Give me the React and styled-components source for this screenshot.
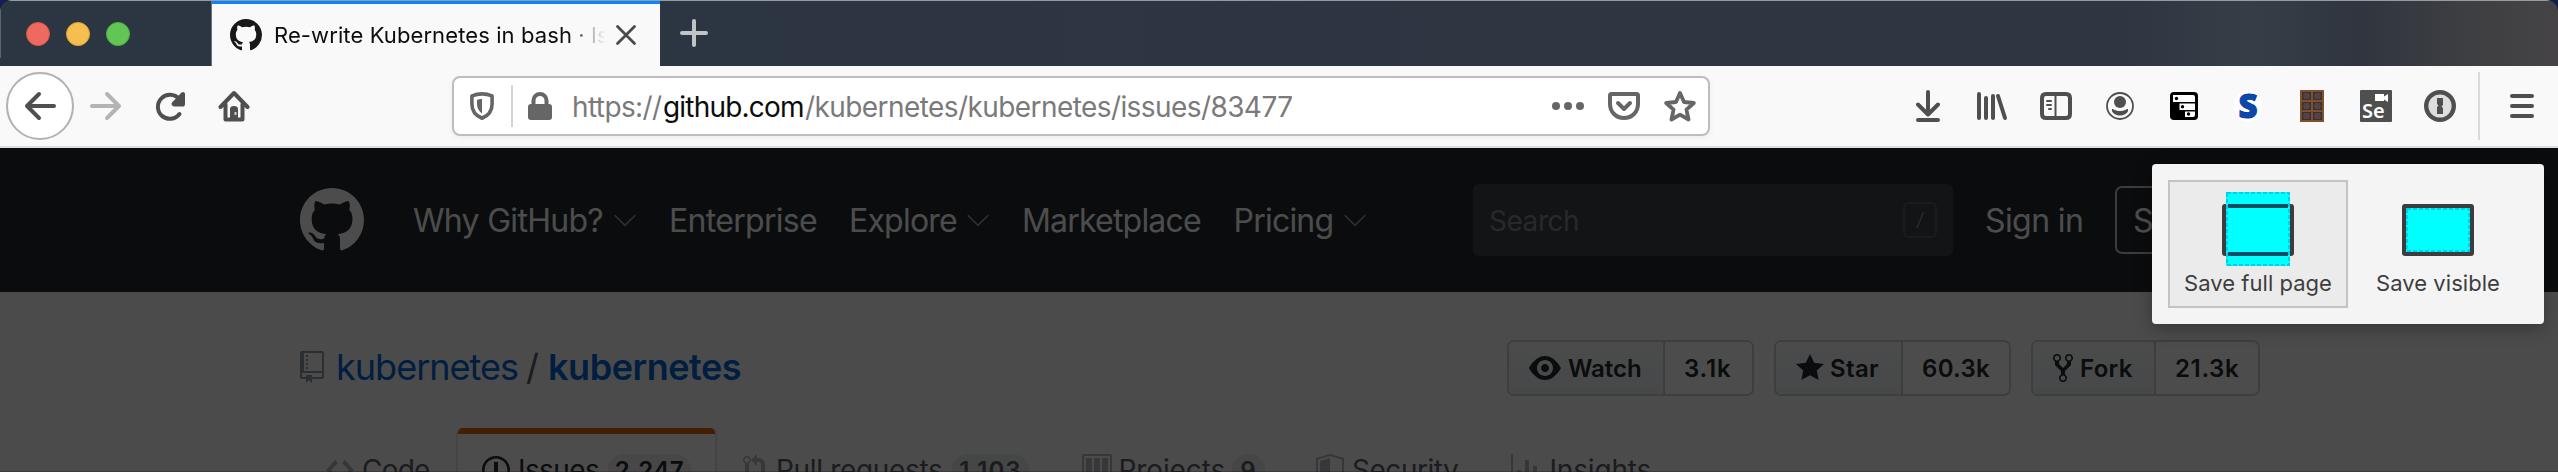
import React from 'react';
import styled, { createGlobalStyle } from 'styled-components';

const GlobalStyle = createGlobalStyle`
  * { box-sizing: border-box; }
  body { margin: 0; background: #14204a; overflow: hidden; }
`;

const Window = styled.div`
  position: relative;
  width: 2558px;
  height: 472px;
  display: flex;
  flex-direction: column;
  overflow: hidden;
  border-radius: 12px 12px 0 0;
  font-family: Inter, "Liberation Sans", sans-serif;
`;

const Label = styled.span`
  flex: none;
  display: block;
  width: ${(p) => (p.$w ? `${p.$w}px` : 'auto')};
  margin-left: ${(p) => p.$ml || 0}px;
  padding-top: ${(p) => p.$drop || 0}px;
  font-size: ${(p) => p.$size}px;
  font-weight: ${(p) => p.$weight || 400};
  letter-spacing: ${(p) => p.$track || 0}px;
  color: ${(p) => p.$color || 'inherit'};
  line-height: 1.25;
  white-space: pre;
`;

/* Browser chrome */

const TabStrip = styled.div`
  flex: none;
  height: 66px;
  display: flex;
  align-items: stretch;
  border-top: 1px solid #959ba2;
  background: linear-gradient(90deg, #2c3643 0, #2d3543 900px, #303641 1900px, #2f3541 2120px, #353e47 2250px, #30353f 2360px, #3e3f42 2470px, #454346 2558px);
`;

const TrafficLights = styled.div`
  width: 212px;
  padding: 8px 0 0 25px;
  display: flex;
  align-items: center;
  gap: 16px;
  height: 57px;
  border-left: 1px solid #5c646f;
`;

const Light = styled.i`
  width: 24px;
  height: 24px;
  border-radius: 50%;
  background: ${(p) => p.$color};
  border: 1px solid ${(p) => p.$edge};
`;

const BrowserTab = styled.div`
  width: 448px;
  display: flex;
  align-items: center;
  border-top: 3px solid #0a84ff;
  background: #f9f9f9;
  padding-left: 18px;
  box-shadow: -1px 0 0 #69717b;
  color: #0c0c0d;
`;

const TabTitle = styled.div`
  width: 333px;
  margin-left: 10px;
  overflow: hidden;
  mask-image: linear-gradient(90deg, #000 296px, rgba(0, 0, 0, 0.32) 318px, transparent 334px);
`;

const CloseIcon = styled.svg`
  margin-left: 9px;
`;

const PlusIcon = styled.svg`
  margin: 18px 0 0 20px;
`;

const Toolbar = styled.div`
  flex: none;
  height: 82px;
  display: flex;
  align-items: center;
  background: #f9f9fa;
  border-bottom: 2px solid #dedee0;
`;

const BackButton = styled.div`
  width: 68px;
  height: 68px;
  margin: 0 16px 0 6px;
  border: 2px solid #b1b1b3;
  border-radius: 50%;
  background: #fff;
  display: flex;
  align-items: center;
  justify-content: center;
`;

const Icon = styled.svg`
  flex: none;
  display: block;
  margin-left: ${(p) => p.$ml || 0}px;
`;

const UrlBar = styled.div`
  width: 1258px;
  height: 60px;
  margin-left: 202px;
  display: flex;
  align-items: center;
  background: #fff;
  border: 2px solid #bdbdbe;
  border-radius: 8px;
  box-shadow: 0 2px 6px rgba(0, 0, 0, 0.05);
  color: #7a7a7b;
`;

const UrlDivider = styled.div`
  width: 2px;
  height: 42px;
  margin-left: 17px;
  background: #d3d3d4;
`;

const Url = styled.div`
  display: flex;
  width: 960px;
  margin-left: 18px;
  padding-top: 2px;
`;

const Extensions = styled.div`
  display: flex;
  margin-left: 186px;
`;

const Cell = styled.div`
  width: 64px;
  height: 40px;
  display: flex;
  align-items: center;
  justify-content: center;
`;

const LetterBadge = styled.div`
  width: 28px;
  height: 32px;
  border-radius: 50%;
  background: #fff;
  color: #0b49ae;
  font: 800 33px/32px "Open Sans", sans-serif;
  text-align: center;
  -webkit-text-stroke: 1px #0b3f94;
`;

const SeleniumBadge = styled.div`
  width: 32px;
  height: 32px;
  border-radius: 1px;
  background: #4f4f4f;
  color: #fff;
  display: flex;
  flex-direction: column;
  align-items: flex-end;
  padding: 4px 4px 0 2px;
  font: 600 20px/20px "Noto Sans", sans-serif;
`;

const SeleniumText = styled.span`
  align-self: flex-start;
  line-height: 19px;
  margin-top: -1px;
`;

const MenuDivider = styled.div`
  width: 2px;
  height: 68px;
  margin: 0 26px 0 6px;
  background: #dadadb;
`;

/* Page */

const Page = styled.div`
  position: relative;
  flex: 1;
  background: #fafbfc;
  overflow: hidden;
`;

const Dim = styled.div`
  position: absolute;
  inset: 0;
  background: rgba(0, 0, 0, 0.7);
  border-bottom: 1px solid rgba(30, 24, 28, 0.3);
`;

const SiteHeader = styled.div`
  height: 144px;
  display: flex;
  align-items: center;
  padding-left: 300px;
  background: #24292e;
  color: #fff;
`;

const SiteNav = styled.div`
  display: flex;
  align-items: center;
  width: 1173px;
`;

const SearchBox = styled.div`
  flex: none;
  width: 480px;
  height: 72px;
  border-radius: 6px;
  background: rgba(255, 255, 255, 0.125);
  display: flex;
  align-items: center;
  justify-content: space-between;
  padding: 0 16px;
  color: #878b90;
`;

const SlashKey = styled.div`
  width: 34px;
  height: 36px;
  border: 2px solid #5b5f64;
  border-radius: 6px;
  display: flex;
  align-items: center;
  justify-content: center;
`;

const SignUp = styled.div`
  width: 134px;
  height: 68px;
  margin-left: 32px;
  border: 2px solid #c9cacc;
  border-radius: 7px;
  display: flex;
  align-items: center;
  padding-left: 16px;
`;

const RepoHead = styled.div`
  height: 136px;
  display: flex;
  align-items: center;
  padding: 14px 0 0 300px;
`;

const RepoTitle = styled.div`
  display: flex;
  align-items: center;
  width: 1207px;
  color: #0366d6;
`;

const SocialButtons = styled.div`
  display: flex;
  gap: 20px;
  padding-top: 2px;
`;

const Social = styled.div`
  display: flex;
  width: ${(p) => p.$w}px;
  height: 56px;
  border: 2px solid #cfd1d3;
  border-radius: 7px;
  background: #fff;
  color: #24292e;
  overflow: hidden;
`;

const SocialAction = styled.div`
  width: ${(p) => p.$w}px;
  display: flex;
  align-items: center;
  padding-left: 20px;
  border-right: 2px solid #cfd1d3;
  background: linear-gradient(#fafbfc, #eff3f6 90%);
`;

const SocialCount = styled.div`
  display: flex;
  align-items: center;
  padding-left: 19px;
`;

const RepoTabs = styled.div`
  display: flex;
  padding-left: 300px;
`;

const RepoTab = styled.div`
  width: ${(p) => p.$w}px;
  height: 84px;
  display: flex;
  align-items: center;
  padding-left: 26px;
  color: #586069;
`;

const ActiveRepoTab = styled(RepoTab)`
  border: solid #e1e4e8;
  border-width: 0 2px;
  border-radius: 6px 6px 0 0;
  padding-left: 24px;
  color: #24292e;
  background: linear-gradient(#e36209 6px, #fff 6px);
`;

const Counter = styled.div`
  width: ${(p) => p.$w}px;
  height: 32px;
  border-radius: 20px;
  background: rgba(27, 31, 35, 0.08);
  display: flex;
  align-items: center;
  justify-content: center;
`;

const Popup = styled.div`
  position: absolute;
  left: 2152px;
  top: 164px;
  width: 392px;
  height: 160px;
  border-radius: 4px;
  background: #f4f4f4;
  box-shadow: 0 4px 18px rgba(0, 0, 0, 0.3);
  display: flex;
  padding: 16px;
`;

const SaveOption = styled.div`
  width: 180px;
  height: 128px;
  display: flex;
  flex-direction: column;
  align-items: center;
  border: 2px solid ${(p) => (p.$active ? '#c3c3c4' : 'transparent')};
  background: ${(p) => (p.$active ? '#ebebeb' : 'transparent')};
  color: #3d3d3f;
  padding-top: 10px;
`;

const OptionText = styled(Label)`
  margin-top: 4px;
`;

const MARK = 'M8 0C3.58 0 0 3.58 0 8c0 3.54 2.29 6.53 5.47 7.59.4.07.55-.17.55-.38 0-.19-.01-.82-.01-1.49-2.01.37-2.53-.49-2.69-.94-.09-.23-.48-.94-.82-1.13-.28-.15-.68-.52-.01-.53.63-.01 1.08.58 1.23.82.72 1.21 1.87.87 2.33.66.07-.52.28-.87.51-1.07-1.78-.2-3.64-.89-3.64-3.95 0-.87.31-1.59.82-2.15-.08-.2-.36-1.02.08-2.12 0 0 .67-.21 2.2.82.64-.18 1.32-.27 2-.27.68 0 1.36.09 2 .27 1.53-1.04 2.2-.82 2.2-.82.44 1.1.16 1.92.08 2.12.51.56.82 1.27.82 2.15 0 3.07-1.87 3.75-3.65 3.95.29.25.54.73.54 1.48 0 1.07-.01 1.93-.01 2.2 0 .21.15.46.55.38A8.013 8.013 0 0 0 16 8c0-4.42-3.58-8-8-8z';
const OCT = {
  repo: [12, 'M4 9H3V8h1v1zm0-3H3v1h1V6zm0-2H3v1h1V4zm0-2H3v1h1V2zm8-1v12c0 .55-.45 1-1 1H6v2l-1.5-1.5L3 16v-2H1c-.55 0-1-.45-1-1V1c0-.55.45-1 1-1h10c.55 0 1 .45 1 1zm-1 10H1v2h2v-1h3v1h5v-2zm0-10H2v9h9V1z'],
  eye: [16, 'M8.06 2C3 2 0 8 0 8s3 6 8.06 6C13 14 16 8 16 8s-3-6-7.94-6zM8 12c-2.2 0-4-1.78-4-4 0-2.2 1.8-4 4-4 2.22 0 4 1.8 4 4 0 2.22-1.78 4-4 4zm2-4c0 1.11-.89 2-2 2-1.11 0-2-.89-2-2 0-1.11.89-2 2-2 1.11 0 2 .89 2 2z'],
  star: [14, 'M14 6l-4.9-.64L7 1 4.9 5.36 0 6l3.6 3.26L2.67 14 7 11.67 11.33 14l-.93-4.74L14 6z'],
  fork: [10, 'M8 1a1.993 1.993 0 0 0-1 3.72V6L5 8 3 6V4.72A1.993 1.993 0 0 0 2 1a1.993 1.993 0 0 0-1 3.72V6.5l3 3v1.78A1.993 1.993 0 0 0 5 15a1.993 1.993 0 0 0 1-3.72V9.5l3-3V4.72A1.993 1.993 0 0 0 8 1zM2 4.2C1.34 4.2.8 3.65.8 3c0-.65.55-1.2 1.2-1.2.65 0 1.2.55 1.2 1.2 0 .65-.55 1.2-1.2 1.2zm3 10c-.66 0-1.2-.55-1.2-1.2 0-.65.55-1.2 1.2-1.2.65 0 1.2.55 1.2 1.2 0 .65-.55 1.2-1.2 1.2zm3-10c-.66 0-1.2-.55-1.2-1.2 0-.65.55-1.2 1.2-1.2.65 0 1.2.55 1.2 1.2 0 .65-.55 1.2-1.2 1.2z'],
  code: [14, 'M9.5 3L8 4.5 11.5 8 8 11.5 9.5 13 14 8 9.5 3zm-5 0L0 8l4.5 5L6 11.5 2.5 8 6 4.5 4.5 3z'],
  issue: [14, 'M7 2.3c3.14 0 5.7 2.56 5.7 5.7s-2.56 5.7-5.7 5.7A5.71 5.71 0 0 1 1.3 8c0-3.14 2.56-5.7 5.7-5.7zM7 1C3.14 1 0 4.14 0 8s3.14 7 7 7 7-3.14 7-7-3.14-7-7-7zm1 3H6v5h2V4zm0 6H6v2h2v-2z'],
  pull: [12, 'M11 11.28V5c-.03-.78-.34-1.47-.94-2.06C9.46 2.35 8.78 2.03 8 2H7V0L4 3l3 3V4h1c.27.02.48.11.69.31.21.2.3.42.31.69v6.28A1.993 1.993 0 0 0 10 15a1.993 1.993 0 0 0 1-3.72zm-1 2.92c-.66 0-1.2-.55-1.2-1.2 0-.65.55-1.2 1.2-1.2.65 0 1.2.55 1.2 1.2 0 .65-.55 1.2-1.2 1.2zM4 3c0-1.11-.89-2-2-2a1.993 1.993 0 0 0-1 3.72v6.56A1.993 1.993 0 0 0 2 15a1.993 1.993 0 0 0 1-3.72V4.72c.59-.34 1-.98 1-1.72zm-.8 10c0 .66-.55 1.2-1.2 1.2-.65 0-1.2-.55-1.2-1.2 0-.65.55-1.2 1.2-1.2.65 0 1.2.55 1.2 1.2zM2 4.2C1.34 4.2.8 3.65.8 3c0-.65.55-1.2 1.2-1.2.65 0 1.2.55 1.2 1.2 0 .65-.55 1.2-1.2 1.2z'],
  project: [15, 'M10 12h3V2h-3v10zm-4-2h3V2H6v8zm-4 4h3V2H2v12zm-1 1h13V1H1v14zM14 0H1a1 1 0 0 0-1 1v14a1 1 0 0 0 1 1h13a1 1 0 0 0 1-1V1a1 1 0 0 0-1-1z'],
  shield: [14, 'M0 2l7-2 7 2v6.02C14 12.69 8.69 16 7 16c-1.69 0-7-3.31-7-7.98V2zm1 .75L7 1l6 1.75v5.268C13 12.104 8.449 15 7 15c-1.449 0-6-2.896-6-6.982V2.75zm1 .75L7 2v12c-1.207 0-5-2.482-5-5.985V3.5z'],
  graph: [16, 'M16 14v1H0V0h1v14h15zM5 13H3V8h2v5zm4 0H7V3h2v10zm4 0h-2V6h2v7z'],
};

function Oct({ name, color }) {
  const [w, d] = OCT[name];
  return (
    <Icon width={w * 2} height={32} viewBox={`0 0 ${w} 16`}>
      <path fill={color} fillRule="evenodd" d={d} />
    </Icon>
  );
}

function Line({ d, color = '#4f4f50', width = 4, ml, size = 32, children }) {
  return (
    <Icon $ml={ml} width={size} height={32} viewBox={`0 0 ${size} 32`} fill="none" stroke={color} strokeWidth={width} strokeLinecap="round" strokeLinejoin="round">
      <path d={d} />
      {children}
    </Icon>
  );
}

function Chevron({ ml }) {
  return (
    <Icon $ml={ml} width="22" height="14" viewBox="0 0 22 14" fill="none" stroke="#fff" strokeOpacity=".55" strokeWidth="1.6">
      <path d="M.8 2.2L11 12.4 21.2 2.2" />
    </Icon>
  );
}

const SOCIAL = [
  { icon: 'eye', text: 'Watch', count: '3.1k', w: 247, aw: 156, tw: -0.04, ct: 0.86, g: 7 },
  { icon: 'star', text: 'Star', count: '60.3k', w: 237, aw: 127, tw: 0.34, ct: 0.29, g: 6 },
  { icon: 'fork', text: 'Fork', count: '21.3k', w: 229, aw: 123, tw: 0.3, ct: 0.64, g: 7 },
];

export default function App() {
  return (
    <Window>
      <GlobalStyle />
      <TabStrip>
        <TrafficLights>
          <Light $color="#ee6a5f" $edge="#d8554b" />
          <Light $color="#f5be4f" $edge="#dba63a" />
          <Light $color="#62c654" $edge="#51ad43" />
        </TrafficLights>
        <BrowserTab>
          <Icon width="32" height="32" viewBox="0 0 16 16"><path fill="#191717" d={MARK} /></Icon>
          <TabTitle><Label $size={22} $ml={2} $drop={2} $track={0.1}>Re-write Kubernetes in bash · Is</Label></TabTitle>
          <CloseIcon width="24" height="24" viewBox="0 0 24 24" stroke="#4a4a4b" strokeWidth="2.8" strokeLinecap="round">
            <path d="M3.500 3.500l17 17M20.500 3.500l-17 17" />
          </CloseIcon>
        </BrowserTab>
        <PlusIcon width="28" height="28" viewBox="0 0 28 28" stroke="#c0c3c8" strokeWidth="4" strokeLinecap="round">
          <path d="M14 2v24M2 14h24" />
        </PlusIcon>
      </TabStrip>

      <Toolbar>
        <BackButton><Line d="M30 16H3M15 4L3 16l12 12" /></BackButton>
        <Line color="#b4b4b5" d="M2 16h27M17 4l12 12-12 12" />
        <Line ml={32} d="M25.5 24A12 12 0 1 1 25 9M29 4v10H19.500z"><path fill="#4f4f50" strokeWidth="2" d="M29.500 6v9.500H20z" /></Line>
        <Line ml={32} d="M2.500 17L16 3l13.500 14M7.500 14v15.500h17V14">
          <path fill="#4f4f50" stroke="none" d="M12 29V19q0-3 4-3t4 3v10z" />
          <path fill="#d0d0d0" stroke="none" d="M16.500 22h2v3h-2z" />
        </Line>
        <UrlBar>
          <Icon $ml={16} width="24" height="28" viewBox="0 0 24 28">
            <path fill="none" stroke="#666667" strokeWidth="3.600" strokeLinejoin="round" d="M12 1.900C8 1.900 4.500 2.900 1.900 3.900V12c0 7 4.500 12 10.100 14.200C17.600 24 22.100 19 22.100 12V3.900C19.500 2.900 16 1.900 12 1.900z" />
            <path fill="#666667" d="M12 7c-2 0-3.500.3-5 .9V12c0 4 2 7.500 5 9.500z" />
          </Icon>
          <UrlDivider />
          <Icon $ml={15} width="24" height="28" viewBox="0 0 24 28">
            <path fill="none" stroke="#666667" strokeWidth="4" d="M5.500 13V8.500a6.500 6.500 0 0 1 13 0V13" />
            <rect y="12" width="24" height="16" rx="3" fill="#666667" />
          </Icon>
          <Url>
            <Label $size={28} $ml={2} $w={91} $track={-0.6}>https://</Label>
            <Label $size={28} $w={142} $track={-0.8} $color="#0c0c0d">github.com</Label>
            <Label $size={28} $track={-0.58}>/kubernetes/kubernetes/issues/83477</Label>
          </Url>
          <Icon $ml={22} width="32" height="8" viewBox="0 0 32 8" fill="#666667">
            <circle cx="4" cy="4" r="4" /><circle cx="16" cy="4" r="4" /><circle cx="28" cy="4" r="4" />
          </Icon>
          <Line ml={24} color="#666667" d="M3.500 4h25q1.500 0 1.500 1.500V14C30 22 24 28 16 28S2 22 2 14V5.500Q2 4 3.500 4zM10 13l6 6 6-6" />
          <Line ml={24} color="#666667" width={3.8} d="M16 3l4 9 9.800 1-7.300 6.700L24.500 29.500 16 24.700 7.500 29.500l2-9.800L2.200 13 12 12z" />
        </UrlBar>
        <Extensions>
          <Cell><Line size={24} d="M12 2v22M2 14.500l10 10 10-10M2 30h20" /></Cell>
          <Cell><Line d="M3 4v24M10 8v20M17 6v22M22 6l7 22" width={4} /></Cell>
          <Cell><Line d="M6 4h20q4 0 4 4v16q0 4-4 4H6q-4 0-4-4V8q0-4 4-4z"><path strokeWidth="2" strokeLinecap="butt" d="M15.500 4v24" /><path strokeWidth="2" d="M7 11h4M7 15h4M9 19h2" /></Line></Cell>
          <Cell>
            <Icon width="28" height="28" viewBox="0 0 28 28" fill="#4f4f50">
              <circle cx="14" cy="14" r="13" fill="none" stroke="#4f4f50" strokeWidth="1.800" />
              <circle cx="14" cy="10" r="6" />
              <path d="M6 17c2 0 3 2 8 2s6-2 8-2c1 4-4 6.500-8 6.500S5 21 6 17z" />
            </Icon>
          </Cell>
          <Cell>
            <Icon width="28" height="28" viewBox="0 0 28 28">
              <rect width="28" height="28" rx="4" fill="#000" />
              <path fill="#fff" d="M3 3h20q2 0 2 2v5H3zM9.500 11.500H25V18H9.500zM15 19.500h10V23q0 2-2 2h-8z" />
              <circle cx="6.500" cy="6.500" r="1.700" /><circle cx="12.500" cy="14.700" r="1.700" /><circle cx="18.500" cy="22" r="1.700" />
            </Icon>
          </Cell>
          <Cell><LetterBadge>S</LetterBadge></Cell>
          <Cell>
            <Icon width="24" height="32" viewBox="0 0 24 32">
              <rect width="24" height="32" fill="#7b5130" />
              <path fill="#3e302b" d="M2 2h9v8H2zM13 2h9v8h-9zM2 12h9v8H2zM13 12h9v8h-9zM2 22h9v8H2zM13 22h9v8h-9z" />
              <path fill="#534349" d="M4 3h5l1 3-1 3H4L3 6zM15 3h5l1 3-1 3h-5l-1-3zM4 13h5l1 3-1 3H4l-1-3zM15 13h5l1 3-1 3h-5l-1-3zM4 23h5l1 3-1 3H4l-1-3zM15 23h5l1 3-1 3h-5l-1-3z" />
            </Icon>
          </Cell>
          <Cell>
            <SeleniumBadge>
              <Icon width="13" height="8" viewBox="0 0 13 8" fill="#fff"><path d="M0 0h9v2.500L13 0v8L9 5.500V7H0z" /></Icon>
              <SeleniumText>Se</SeleniumText>
            </SeleniumBadge>
          </Cell>
          <Cell>
            <Icon width="32" height="32" viewBox="0 0 32 32">
              <circle cx="16" cy="16" r="13.800" fill="#dedede" stroke="#4f4f50" strokeWidth="4.400" />
              <path fill="#4f4f50" d="M13 8h6v7l-1.500 1.500L19 18v6h-6v-7l1.500-1.500L13 14z" />
            </Icon>
          </Cell>
        </Extensions>
        <MenuDivider />
        <Line d="M6 6h20M6 16h20M6 26h20" />
      </Toolbar>

      <Page>
        <SiteHeader>
          <SiteNav>
            <Icon width="64" height="64" viewBox="0 0 16 16"><path fill="#fff" d={MARK} /></Icon>
            <Label $ml={49} $drop={2} $size={32} $w={190} $track={-0.7}>Why GitHub?</Label>
            <Chevron ml={11} />
            <Label $ml={33} $drop={2} $size={32} $w={149} $track={-0.7}>Enterprise</Label>
            <Label $ml={31} $drop={2} $size={32} $w={108} $track={-0.79}>Explore</Label>
            <Chevron ml={10} />
            <Label $ml={33} $drop={2} $size={32} $w={180} $track={-0.8}>Marketplace</Label>
            <Label $ml={31.5} $drop={2} $size={32} $w={100} $track={-0.78}>Pricing</Label>
            <Chevron ml={10.5} />
          </SiteNav>
          <SearchBox>
            <Label $size={28} $drop={2} $track={-0.47}>Search</Label>
            <SlashKey>
              <Icon width="10" height="20" viewBox="0 0 10 20" stroke="#878b90" strokeWidth="1.600"><path d="M8.500 2L2 18" /></Icon>
            </SlashKey>
          </SearchBox>
          <Label $ml={32} $drop={2} $size={32} $w={98} $track={-0.59}>Sign in</Label>
          <SignUp><Label $drop={2} $size={32} $track={-0.6}>Sign up</Label></SignUp>
        </SiteHeader>

        <RepoHead>
          <RepoTitle>
            <Oct name="repo" color="#959da5" />
            <Label $ml={12} $drop={1} $size={36} $w={190} $track={-0.98}>kubernetes</Label>
            <Label $drop={1} $size={36} $w={22} $color="#586069">/</Label>
            <Label $drop={1} $size={36} $weight={600} $track={-0.45}>kubernetes</Label>
          </RepoTitle>
          <SocialButtons>
            {SOCIAL.map((s) => (
              <Social key={s.text} $w={s.w}>
                <SocialAction $w={s.aw}>
                  <Oct name={s.icon} color="#24292e" />
                  <Label $ml={s.g} $drop={1} $size={24} $weight={600} $track={s.tw}>{s.text}</Label>
                </SocialAction>
                <SocialCount><Label $drop={1} $size={24} $weight={600} $track={s.ct}>{s.count}</Label></SocialCount>
              </Social>
            ))}
          </SocialButtons>
        </RepoHead>

        <RepoTabs>
          <RepoTab $w={156}>
            <Oct name="code" color="#b4b9be" />
            <Label $ml={8} $drop={1} $size={28} $track={-0.8}>Code</Label>
          </RepoTab>
          <ActiveRepoTab $w={261}>
            <Oct name="issue" color="#24292e" />
            <Label $ml={8} $drop={1} $size={28} $w={90} $track={-0.59}>Issues</Label>
            <Counter $w={83}><Label $drop={1} $size={24} $weight={600} $track={0.46}>2,247</Label></Counter>
          </ActiveRepoTab>
          <RepoTab $w={338.5}>
            <Oct name="pull" color="#b4b9be" />
            <Label $ml={9} $drop={1} $size={28} $w={176} $track={-0.33}>Pull requests</Label>
            <Counter $w={77}><Label $drop={1} $size={24} $weight={600} $track={1.09}>1,103</Label></Counter>
          </RepoTab>
          <RepoTab $w={234.5}>
            <Oct name="project" color="#b4b9be" />
            <Label $ml={7} $drop={1} $size={28} $w={113} $track={-0.11}>Projects</Label>
            <Counter $w={33}><Label $drop={1} $size={24} $weight={600}>9</Label></Counter>
          </RepoTab>
          <RepoTab $w={194.5}>
            <Oct name="shield" color="#b4b9be" />
            <Label $ml={8} $drop={1} $size={28} $track={-0.47}>Security</Label>
          </RepoTab>
          <RepoTab $w={200}>
            <Oct name="graph" color="#b4b9be" />
            <Label $ml={7} $drop={1} $size={28} $track={-0.18}>Insights</Label>
          </RepoTab>
        </RepoTabs>
        <Dim />
      </Page>

      <Popup>
        <SaveOption $active>
          <Icon width="72" height="74" viewBox="0 0 72 74">
            <rect x="2" y="14" width="68" height="48" rx="1" fill="none" stroke="#3d3d3f" strokeWidth="4" />
            <rect x="4" width="64" height="74" fill="#00ffff" />
            <path fill="#004e63" d="M6 12h60v4H6zM6 60h60v4H6z" />
            <rect x="5" y="1" width="62" height="72" fill="none" stroke="#00d0e6" strokeWidth="2" strokeDasharray="4 2" />
          </Icon>
          <OptionText $size={22} $track={0.03}>Save full page</OptionText>
        </SaveOption>
        <SaveOption>
          <Icon width="72" height="74" viewBox="0 0 72 74">
            <rect x="2" y="14" width="68" height="48" rx="1" fill="#00ffff" stroke="#3d3d3f" strokeWidth="4" />
            <rect x="5" y="17" width="62" height="42" fill="none" stroke="#00d0e6" strokeWidth="2" strokeDasharray="4 2" />
          </Icon>
          <OptionText $size={22} $track={0.04}>Save visible</OptionText>
        </SaveOption>
      </Popup>
    </Window>
  );
}
